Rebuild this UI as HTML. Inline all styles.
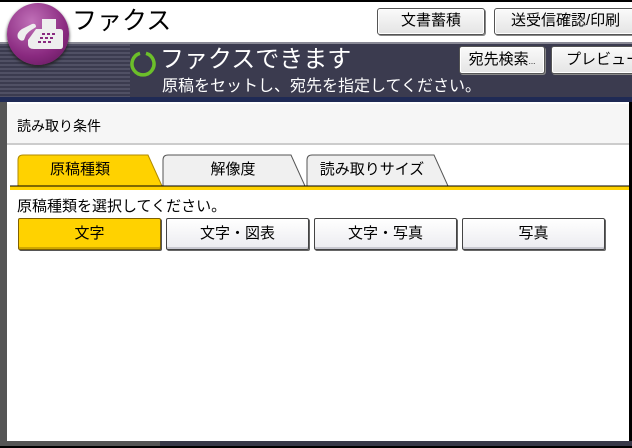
<!DOCTYPE html><html><head><meta charset="utf-8"><style>
*{margin:0;padding:0;box-sizing:border-box}
body{width:632px;height:448px;background:#000;position:relative;overflow:hidden;font-family:"Liberation Sans","Noto Sans CJK JP",sans-serif;color:#000}
.a{position:absolute}
.btn{position:absolute;background:linear-gradient(#fafafa,#e4e4e4);border:1px solid #555;border-radius:3px;box-shadow:inset 0 0 0 1px #fff,1px 1px 0 #888;text-align:center;font-size:15px}
.tab{position:absolute;top:154px;height:32px;font-size:15px;text-align:center;line-height:32px}
.sb{position:absolute;top:218px;height:32px;border:1px solid #444;border-radius:2px;text-align:center;line-height:29px;font-size:15px;background:linear-gradient(#fff,#ececf0);box-shadow:inset 0 -2px 0 #c8c8d0,1px 1px 0 #666}
</style></head><body>
<div class="a" style="left:0;top:2px;width:632px;height:40px;background:#fff"></div>
<div class="a" style="left:72px;top:4px;font-size:25px;line-height:34px">ファクス</div>
<div class="btn" style="left:377px;top:8px;width:108px;height:27px;line-height:24px">文書蓄積</div>
<div class="btn" style="left:494px;top:8px;width:145px;height:27px;line-height:24px;text-align:left;padding-left:16px">送受信確認/印刷</div>
<div class="a" style="left:0;top:42px;width:632px;height:60px;background:#3b3b4f;border-top:2px solid #8a8a96"></div>
<div class="a" style="left:0;top:44px;width:130px;height:54px;background:repeating-linear-gradient(#55556a 0 2px,#3b3b4f 2px 4px);opacity:.8"></div>
<div class="a" style="left:0;top:97px;width:632px;height:5px;background:#1f2a55"></div>
<div class="a" style="left:7px;top:3px;width:62px;height:62px;border-radius:50%;background:radial-gradient(circle at 40% 30%,#c070b8,#8a2a80 60%,#5a1555);box-shadow:0 2px 3px #222"></div>
<svg class="a" style="left:14px;top:16px" width="50" height="36" viewBox="0 0 50 36"><path d="M4 22 Q2 17 8 13 L18 8 Q22 7 22 11 L19 13 Q15 15 12 19 L10 24 Q7 26 4 22 Z" fill="#eee"/><rect x="28" y="3" width="14" height="10" fill="#eee"/><path d="M14 24 L22 13 H46 Q49 13 49 16 V30 Q49 33 46 33 H20 Q14 33 14 28 Z" fill="#eee"/><g fill="#8a2a80"><rect x="28" y="17" width="3" height="2"/><rect x="33" y="17" width="3" height="2"/><rect x="38" y="17" width="3" height="2"/><rect x="26" y="21" width="3" height="2"/><rect x="31" y="21" width="3" height="2"/><rect x="36" y="21" width="3" height="2"/><rect x="24" y="25" width="3" height="2"/><rect x="29" y="25" width="3" height="2"/><rect x="34" y="25" width="3" height="2"/></g></svg>
<svg class="a" style="left:129px;top:50px" width="28" height="28"><path d="M11 3.3 A11 11 0 1 0 17 3.3" fill="none" stroke="#6cbf2a" stroke-width="3.5"/></svg>
<div class="a" style="left:160px;top:45px;font-size:24px;line-height:30px;color:#fff">ファクスできます</div>
<div class="a" style="left:162px;top:77px;font-size:16px;line-height:20px;color:#fff">原稿をセットし、宛先を指定してください。</div>
<div class="btn" style="left:459px;top:46px;width:86px;height:28px;line-height:26px">宛先検索<span style="font-size:8px">...</span></div>
<div class="btn" style="left:551px;top:46px;width:100px;height:28px;line-height:26px;text-align:left;padding-left:14px">プレビュー</div>
<div class="a" style="left:0;top:102px;width:7px;height:340px;background:#555"></div>
<div class="a" style="left:7px;top:102px;width:622px;height:339px;background:#fff"></div>
<div class="a" style="left:7px;top:104px;width:622px;height:41px;background:#f6f6f6;border-bottom:2px solid #ccc"></div>
<div class="a" style="left:17px;top:116px;font-size:14px;line-height:20px">読み取り条件</div>
<svg class="a" style="left:10px;top:152px" width="619" height="40"><path d="M8 34 V8 Q8 3 13 3 H138 L152 34 Z" fill="#ffd200" stroke="#b08a00"/><path d="M153 34 V8 Q153 3 158 3 H281 L295 34 Z" fill="#f0f0f0" stroke="#555"/><path d="M297 34 V8 Q297 3 302 3 H424 L438 34 Z" fill="#f0f0f0" stroke="#555"/><rect x="0" y="34" width="619" height="4" fill="#ffd200"/><line x1="0" y1="34" x2="619" y2="34" stroke="#000"/></svg>
<div class="tab" style="left:18px;width:124px">原稿種類</div>
<div class="tab" style="left:163px;width:140px">解像度</div>
<div class="tab" style="left:307px;width:130px">読み取りサイズ</div>
<div class="a" style="left:17px;top:197px;font-size:15px;line-height:20px">原稿種類を選択してください。</div>
<div class="sb" style="left:18px;width:143px;background:#ffd200;border-color:#806000;box-shadow:inset 0 -2px 0 #d0a800,1px 1px 0 #555">文字</div>
<div class="sb" style="left:166px;width:143px">文字・図表</div>
<div class="sb" style="left:314px;width:143px">文字・写真</div>
<div class="sb" style="left:462px;width:143px">写真</div>
<div class="a" style="left:0;top:441px;width:160px;height:5px;background:#555"></div>
<div class="a" style="left:160px;top:441px;width:472px;height:5px;background:#383848"></div>
</body></html>
